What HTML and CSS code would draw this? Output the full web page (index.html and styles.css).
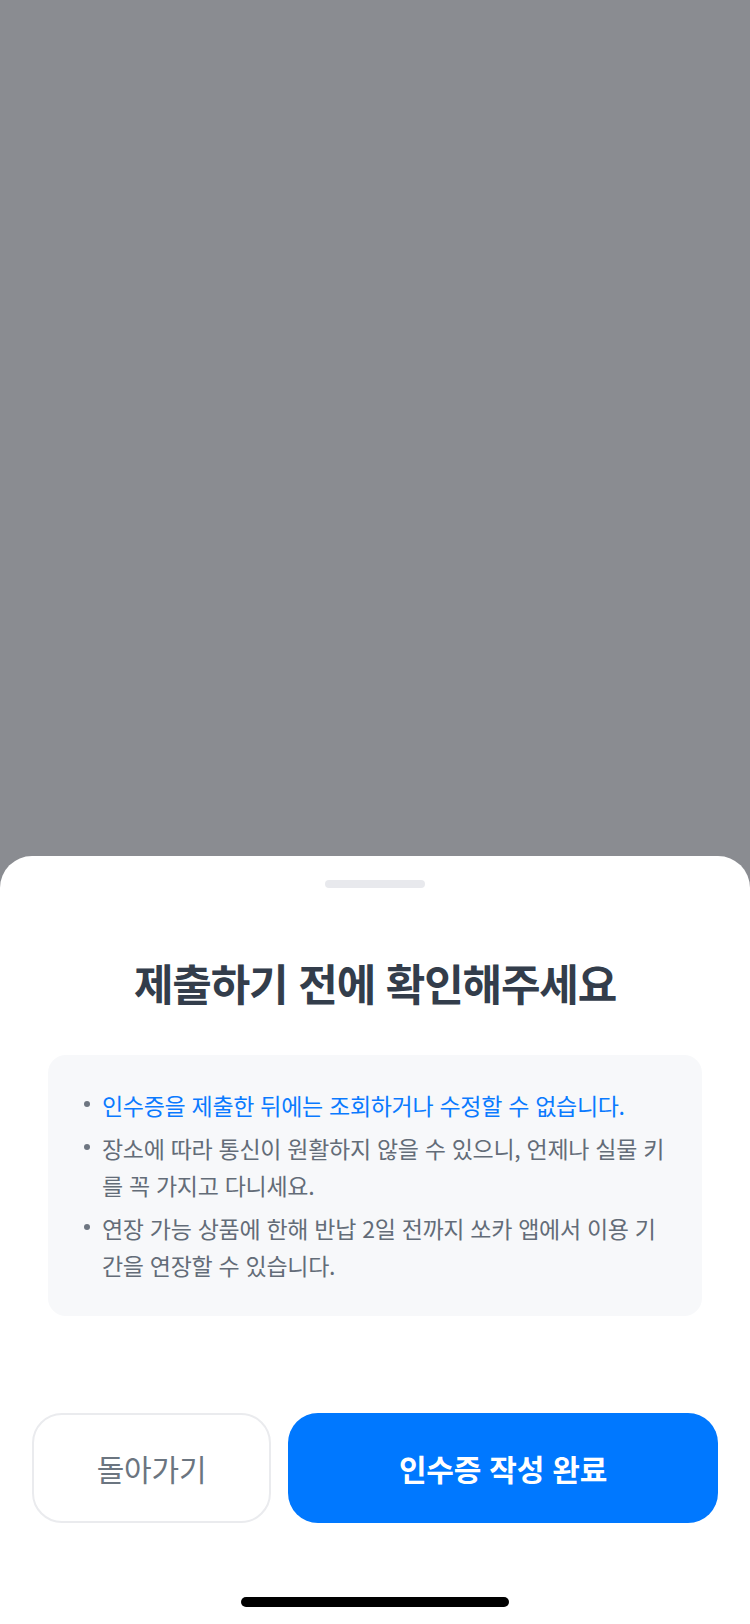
FILE: index.html
```html
<!DOCTYPE html>
<html lang="ko">
<head>
<meta charset="utf-8">
<title>제출하기 전에 확인해주세요</title>
<link rel="stylesheet" href="styles.css">
</head>
<body>
<div class="screen">
  <div class="dim"></div>
  <div class="sheet">
    <div class="handle-wrap"><div class="handle"></div></div>
    <h1 class="title">제출하기 전에 확인해주세요</h1>
    <ul class="notice">
      <li class="notice-item notice-item--accent"><span class="dot"></span><span class="notice-text">인수증을 제출한 뒤에는 조회하거나 수정할 수 없습니다.</span></li>
      <li class="notice-item"><span class="dot"></span><span class="notice-text">장소에 따라 통신이 원활하지 않을 수 있으니, 언제나 실물 키를 꼭 가지고 다니세요.</span></li>
      <li class="notice-item"><span class="dot"></span><span class="notice-text">연장 가능 상품에 한해 반납 2일 전까지 쏘카 앱에서 이용 기간을 연장할 수 있습니다.</span></li>
    </ul>
    <div class="actions">
      <button class="btn btn--ghost">돌아가기</button>
      <button class="btn btn--primary">인수증 작성 완료</button>
    </div>
    <div class="home-wrap"><div class="home-indicator"></div></div>
  </div>
</div>
</body>
</html>
```

FILE: styles.css
```css
* { box-sizing: border-box; }
html, body { margin: 0; padding: 0; }
body {
  width: 750px;
  height: 1624px;
  overflow: hidden;
  font-family: "Noto Sans CJK KR", "Noto Sans", sans-serif;
  background: #8a8c91;
}
.screen {
  display: flex;
  flex-direction: column;
  height: 1624px;
}
.dim {
  flex: 1;
  background: #8a8c91;
}
.sheet {
  background: #ffffff;
  border-radius: 32px 32px 0 0;
  display: flex;
  flex-direction: column;
}
.handle-wrap {
  display: flex;
  justify-content: center;
  padding-top: 24px;
}
.handle {
  width: 100px;
  height: 8px;
  border-radius: 4px;
  background: #e8e9ed;
}
.title {
  margin: 68px 0 0;
  text-align: center;
  font-size: 43px;
  line-height: 52px;
  font-weight: 700;
  letter-spacing: -1.2px;
  color: #333d4b;
}
.notice {
  list-style: none;
  margin: 47px 48px 0;
  padding: 32px 34px 32px 36px;
  background: #f7f8fa;
  border-radius: 18px;
  display: flex;
  flex-direction: column;
  gap: 6px;
}
.notice-item {
  display: flex;
  align-items: flex-start;
  gap: 12px;
  font-size: 23px;
  line-height: 37px;
  color: #636c78;
  letter-spacing: -0.3px;
  word-break: break-all;
}
.notice-item--accent { color: #0a7aff; }
.dot {
  flex: none;
  width: 6px;
  height: 6px;
  border-radius: 50%;
  background: #6e7681;
  margin-top: 14px;
}
.notice-text { flex: 1; }
.actions {
  display: flex;
  gap: 17px;
  padding: 0 32px;
  margin-top: 97px;
}
.btn {
  height: 110px;
  border-radius: 30px;
  font-family: "Noto Sans CJK KR", "Noto Sans", sans-serif;
  font-size: 30px;
  letter-spacing: -0.2px;
  cursor: pointer;
}
.btn--ghost {
  width: 239px;
  flex: none;
  background: #ffffff;
  border: 2px solid #eaebee;
  color: #6b7580;
  font-weight: 400;
}
.btn--primary {
  flex: 1;
  background: #0078ff;
  border: none;
  color: #ffffff;
  font-weight: 700;
}
.home-wrap {
  display: flex;
  justify-content: center;
  padding: 74px 0 17px;
}
.home-indicator {
  width: 268px;
  height: 10px;
  border-radius: 5px;
  background: #000000;
}
```
